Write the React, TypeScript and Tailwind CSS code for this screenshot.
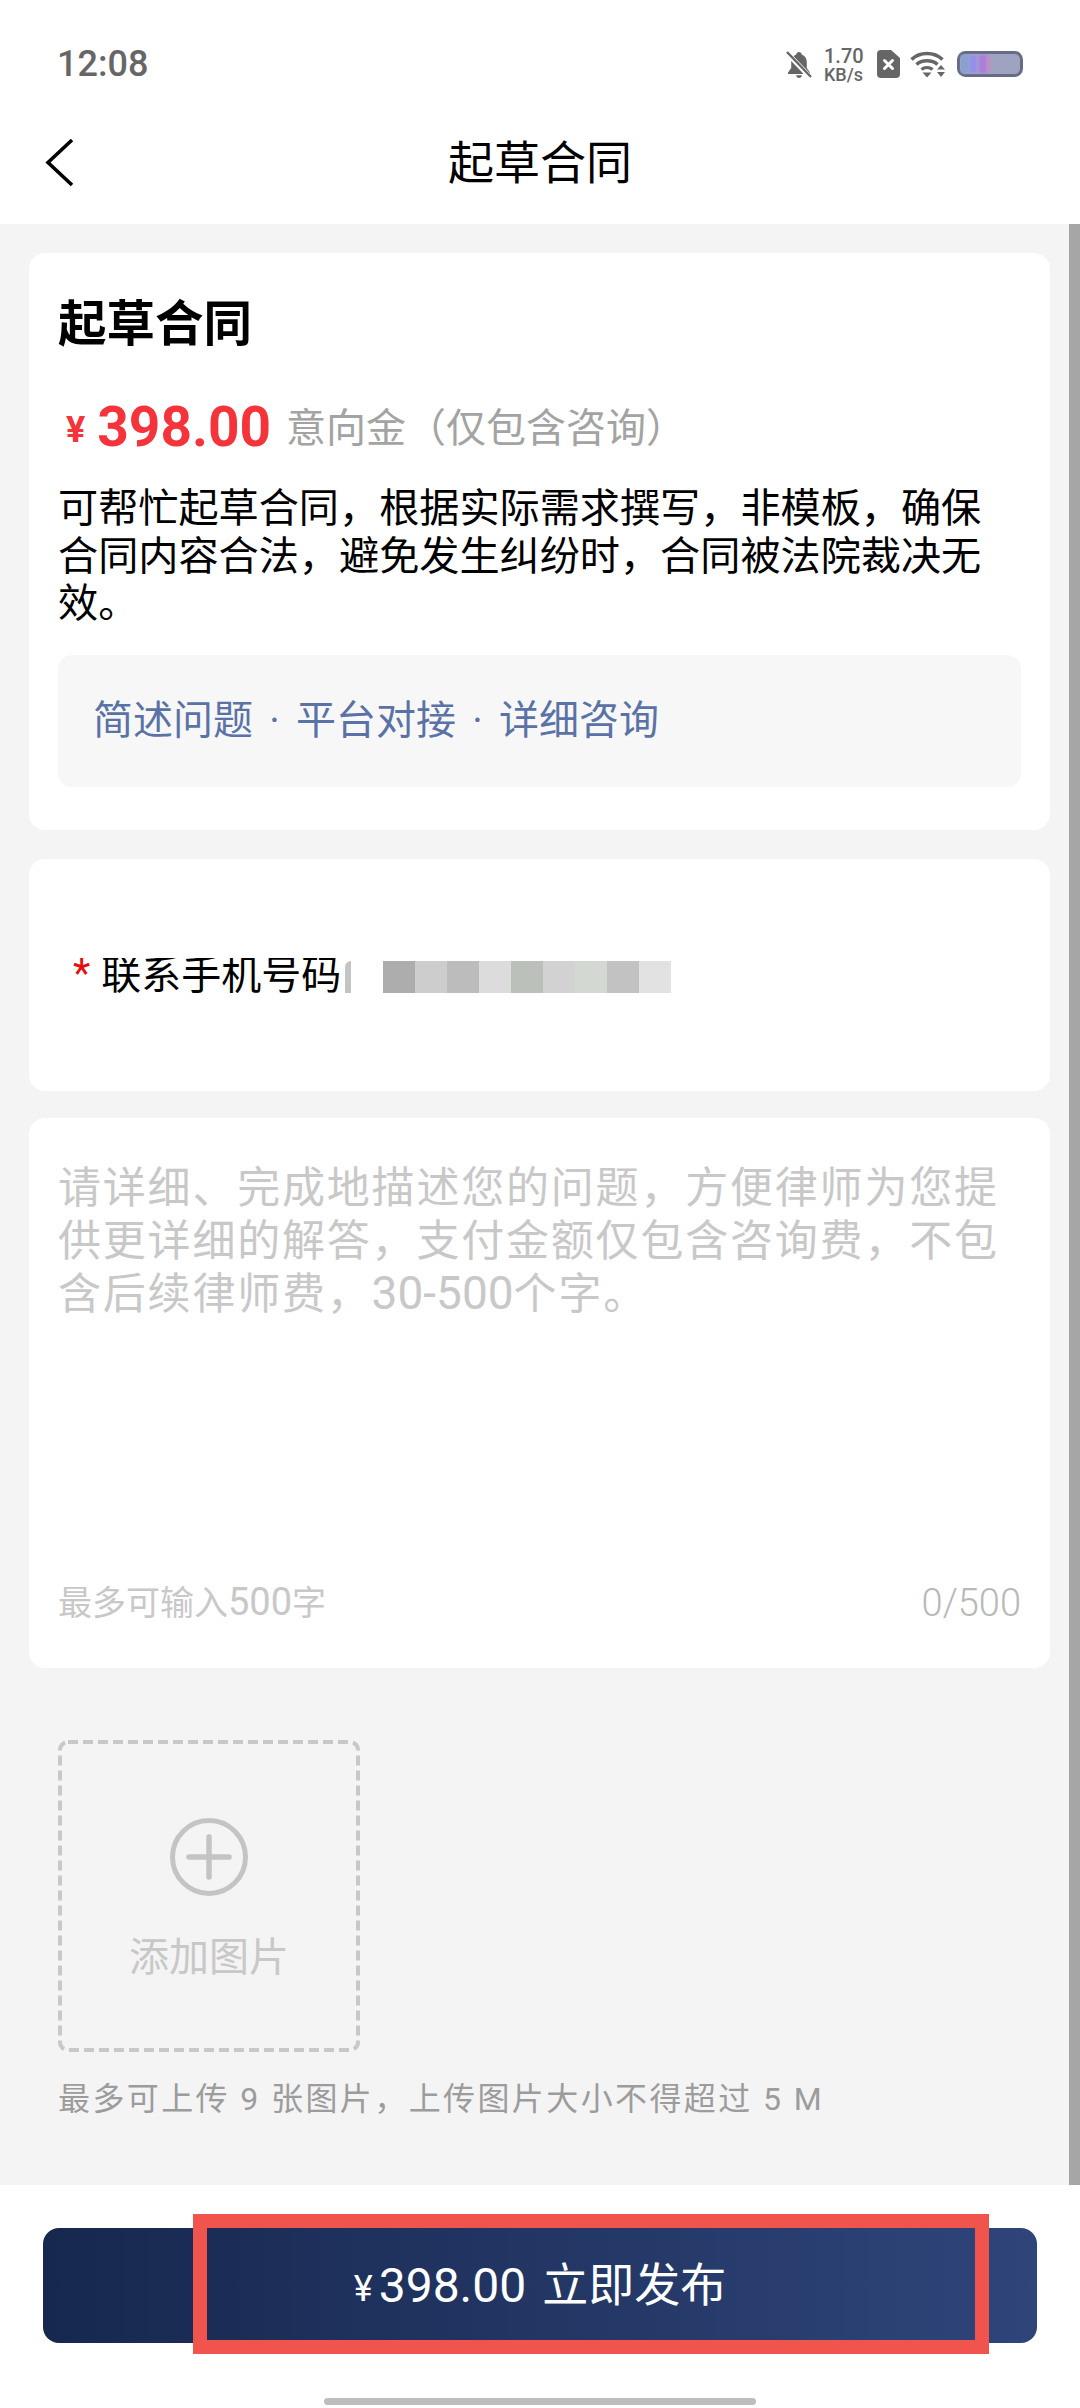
import React from 'react';

const FONT = "font-['Roboto','Noto_Sans_CJK_SC',sans-serif]";

const mosaic = ['#adadad', '#cdcdcd', '#bcbcbc', '#dcdcdc', '#bbc0ba', '#d2d2d2', '#d4d8d3', '#c2c2c2', '#e2e2e2'];

const BellOff = () => (
  <svg width="26" height="29" viewBox="0 0 26 29" fill="none">
    <path d="M13 2c-1.500 0-2.500 1-2.800 2.400C7 5.600 5.200 8.400 5.200 12v6L2 22.500v1.500h22v-1.500L20.800 18v-6c0-3.600-1.800-6.400-5-7.600C15.500 3 14.500 2 13 2z" fill="#666" />
    <path d="M10 25.200h6c-.3 1.600-1.500 2.800-3 2.800s-2.700-1.200-3-2.800z" fill="#666" />
    <path d="M1 3l23 24" stroke="#fff" strokeWidth="5" />
    <path d="M1 2l24 25" stroke="#666" strokeWidth="2.400" />
  </svg>
);

const SimError = () => (
  <svg width="23" height="28" viewBox="0 0 23 28" fill="none">
    <path d="M4 0h10l9 8v16a4 4 0 0 1-4 4H4a4 4 0 0 1-4-4V4a4 4 0 0 1 4-4z" fill="#666" />
    <path d="M7.500 10.500l8 8M15.500 10.500l-8 8" stroke="#fff" strokeWidth="3" strokeLinecap="round" />
  </svg>
);

const Wifi = () => (
  <svg width="36" height="28" viewBox="0 0 36 28" fill="none">
    <path d="M1.500 9.500C10 1.500 24 1.500 32.500 9.500" stroke="#666" strokeWidth="3.600" />
    <path d="M6.500 14.500C12 9.500 22 9.500 27.500 14.500" stroke="#666" strokeWidth="3.600" />
    <path d="M11.500 19.500C14.500 16.800 19.500 16.800 22.500 19.500" stroke="#666" strokeWidth="3.200" />
    <path d="M12.500 22.500h9L17 27.500z" fill="#666" />
    <path d="M27 19.500h8l-4-4.500zM27 22h8l-4 5z" fill="#666" />
  </svg>
);

const Battery = () => (
  <svg width="66" height="26" viewBox="0 0 66 26" fill="none">
    <defs>
      <filter id="soft">
        <feGaussianBlur stdDeviation="1" />
      </filter>
    </defs>
    <rect x="1.500" y="1.500" width="63" height="23" rx="7" fill="#9fa3c1" stroke="#666c86" strokeWidth="3" />
    <g filter="url(#soft)">
      <rect x="4" y="4" width="8" height="18" fill="#8ba0d2" />
      <rect x="13" y="4" width="7" height="18" fill="#968fe8" />
      <rect x="22" y="4" width="7" height="18" fill="#ab7de0" />
      <rect x="30" y="4" width="3" height="18" fill="#c987c8" />
    </g>
  </svg>
);

const StatusBar = () => (
  <div className="flex h-[82px] items-center justify-between pt-[46px] pr-[57px] pl-[57px]">
    <span className="text-[36px] leading-[36px] font-medium text-[#666666]">12:08</span>
    <div className="flex items-center">
      <BellOff />
      <div className="ml-[12px] flex w-[42px] flex-col items-start font-medium text-[#666666]">
        <span className="text-[20px] leading-[20px]">1.70</span>
        <span className="text-[18px] leading-[17px]">KB/s</span>
      </div>
      <div className="ml-[11px]"><SimError /></div>
      <div className="ml-[10px]"><Wifi /></div>
      <div className="ml-[11px]"><Battery /></div>
    </div>
  </div>
);

const NavBar = () => (
  <div className="relative flex h-[142px] items-center justify-center pt-[20px]">
    <svg className="absolute top-[56px] left-[44px]" width="32" height="50" viewBox="0 0 32 50" fill="none">
      <path d="M28 2L4 24.500 28 47" stroke="#000" strokeWidth="3.600" />
    </svg>
    <h1 className="text-[46px] leading-[54px] font-normal text-black">起草合同</h1>
  </div>
);

const Steps = () => (
  <div className="mt-[27px] flex h-[132px] items-center rounded-[14px] bg-[#f7f7f7] pl-[35px] text-[40px] text-[#5a72a6]">
    <span>简述问题</span>
    <span className="w-[43px] text-center">·</span>
    <span>平台对接</span>
    <span className="w-[43px] text-center">·</span>
    <span>详细咨询</span>
  </div>
);

const ServiceCard = () => (
  <section className="rounded-[16px] bg-white px-[29px] pt-[48px] pb-[43px]">
    <h2 className="text-[48.500px] leading-[48px] font-bold text-black">起草合同</h2>
    <div className="mt-[50px] flex h-[56px] items-center">
      <span className="mt-[6px] ml-[8px] text-[36px] font-bold text-[#f5333a]">¥</span>
      <span className="ml-[12px] text-[55px] leading-[56px] font-bold text-[#f5333a]">398.00</span>
      <span className="mt-[4px] ml-[15px] text-[40px] text-[#a3a3a3]">意向金（仅包含咨询）</span>
    </div>
    <p className="mt-[30px] w-[930px] text-[40.150px] leading-[47.500px] text-black">
      可帮忙起草合同，根据实际需求撰写，非模板，确保合同内容合法，避免发生纠纷时，合同被法院裁决无效。
    </p>
    <Steps />
  </section>
);

const PhoneCard = () => (
  <section className="mt-[29px] h-[232px] rounded-[16px] bg-white pt-[99px] pl-[44px]">
    {/* masked number: the row is cut off under the pixelated strip */}
    <div className="flex h-[35px] items-start overflow-hidden">
      <span className="-mt-[8px] text-[40px] leading-[48px] text-[#e60f0f]">*</span>
      <span className="-mt-[6px] ml-[11px] w-[244px] text-[40px] leading-[48px] text-black">联系手机号码</span>
      <div className="mt-[3px] h-[32px] w-[6px] rounded-tl-full bg-[#c4c4c4]" />
      <div className="mt-[3px] ml-[32px] flex h-[32px]">
        {mosaic.map((color, i) => (
          <div key={i} className="h-full w-[32px]" style={{ backgroundColor: color }} />
        ))}
      </div>
    </div>
  </section>
);

const DescriptionCard = () => (
  <section className="mt-[27px] flex h-[550px] flex-col justify-between rounded-[16px] bg-white px-[29px] pt-[44px] pb-[44px]">
    <p className="w-[960px] text-[43px] leading-[53px] tracking-[1.800px] text-[#c8c8c8]">
      请详细、完成地描述您的问题，方便律师为您提供更详细的解答，支付金额仅包含咨询费，不包含后续律师费，
      <span className="text-[46px] leading-[46px] tracking-normal">30-500</span>个字。
    </p>
    <div className="flex items-center justify-between">
      <span className="text-[34px] leading-[42px] text-[#c8c8c8]">
        最多可输入<span className="text-[38px] leading-[38px]">500</span>字
      </span>
      <span className="text-[38px] leading-[42px] font-light text-[#b8b8b8]">0/500</span>
    </div>
  </section>
);

const ImageUpload = () => (
  <div className="mt-[72px] pl-[29px]">
    <div className="relative flex h-[312px] w-[302px] flex-col items-center pt-[78px]">
      <svg className="absolute inset-0" width="302" height="312" fill="none">
        <rect x="2" y="2" width="298" height="308" rx="8" stroke="#c8c8c8" strokeWidth="4" strokeDasharray="10 5" />
      </svg>
      <svg width="78" height="78" viewBox="0 0 78 78" fill="none">
        <circle cx="39" cy="39" r="36.500" stroke="#c4c4c4" strokeWidth="5" />
        <path d="M39 19v40M19 39h40" stroke="#c4c4c4" strokeWidth="5.500" strokeLinecap="round" />
      </svg>
      <span className="mt-[38px] text-[40px] leading-[48px] text-[#c8c8c8]">添加图片</span>
    </div>
    <p className="mt-[26px] text-[32px] leading-[42px] tracking-[2.400px] text-[#9c9c9c]">
      最多可上传 9 张图片，上传图片大小不得超过 5 M
    </p>
  </div>
);

const App: React.FC = () => {
  return (
    <div className={`flex h-[2408px] w-[1080px] flex-col overflow-hidden bg-white ${FONT}`}>
      <StatusBar />
      <NavBar />

      <main className="relative flex-1 bg-[#f4f4f4] pt-[29px] pr-[30px] pl-[29px]">
        <ServiceCard />
        <PhoneCard />
        <DescriptionCard />
        <ImageUpload />
        {/* scroll track */}
        <div className="absolute top-0 right-0 bottom-0 w-[11px] bg-[#a6a6a6]" />
      </main>

      <footer className="relative h-[223px] bg-white px-[43px] pt-[43px]">
        <button className="flex h-[115px] w-[994px] items-center justify-center rounded-[16px] bg-gradient-to-r from-[#17284f] to-[#2f457a] text-white">
          <span className="mt-[6px] text-[36px]">¥</span>
          <span className="ml-[6px] text-[48px]">398.00</span>
          <span className="ml-[16px] text-[46px]">立即发布</span>
        </button>
        <div className="absolute top-[29px] left-[193px] h-[140px] w-[796px] border-[14px] border-[#f0544c]" />
        <div className="mx-auto mt-[55px] h-[7px] w-[432px] rounded-full bg-[#bdbdbd]" />
      </footer>
    </div>
  );
};

export default App;
